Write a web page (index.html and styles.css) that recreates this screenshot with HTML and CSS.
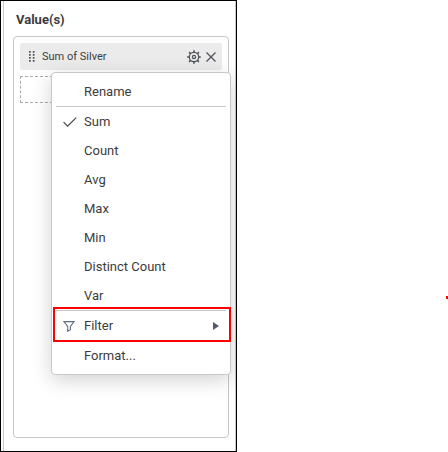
FILE: index.html
```html
<!DOCTYPE html>
<html lang="en">
<head>
<meta charset="utf-8">
<title>Value(s)</title>
<link rel="stylesheet" href="styles.css">
</head>
<body>
<main class="frame">
  <section class="panel">
    <h1 class="title">Value(s)</h1>
    <div class="values">
      <div class="chip">
        <svg class="grip" width="6" height="11" viewBox="0 0 6 11" fill="#505050"><path d="M0 0h1.7v1.7H0zM3.8 0h1.7v1.7H3.8zM0 3h1.7v1.7H0zM3.8 3h1.7v1.7H3.8zM0 6h1.7v1.7H0zM3.8 6h1.7v1.7H3.8zM0 9h1.7v1.7H0zM3.8 9h1.7v1.7H3.8z"/></svg>
        <span class="chip-label">Sum of Silver</span>
        <svg class="gear" width="14" height="14" viewBox="0 0 14 14" fill="none" stroke="#50545b"><circle cx="7" cy="7" r="4.7" stroke-width="1.3"/><circle cx="7" cy="7" r="1.6" stroke-width="1.3"/><path stroke-width="1.6" d="M7 .2v2M7 11.8v2M.2 7h2M11.8 7h2M2.1 2.1l1.5 1.5M10.4 10.4l1.5 1.5M2.1 11.9l1.5-1.5M10.4 3.6l1.5-1.5"/></svg>
        <svg class="close" width="10" height="10" viewBox="0 0 10 10" fill="none" stroke="#50545b" stroke-width="1.3"><path d="M.5.5l9 9M9.5.5l-9 9"/></svg>
      </div>
      <div class="drop"></div>
      <div class="menu">
        <div class="item">Rename</div>
        <hr>
        <div class="item"><svg class="icon" width="14" height="10" viewBox="0 0 14 10" fill="none" stroke="#444" stroke-width="1.2"><path d="M.6 5.1l4 4L13.2.6"/></svg>Sum</div>
        <div class="item">Count</div>
        <div class="item">Avg</div>
        <div class="item">Max</div>
        <div class="item">Min</div>
        <div class="item">Distinct Count</div>
        <div class="item">Var</div>
        <hr>
        <div class="item"><svg class="icon funnel" width="12" height="11" viewBox="0 0 12 11" fill="none" stroke="#5d6f86" stroke-width="1.1"><path d="M.9.6h10.2L7.4 5.4v3.2L4.7 10.2V5.4z"/></svg>Filter<svg class="arrow" width="6" height="8" viewBox="0 0 6 8" fill="#565c66"><path d="M0 0l6 4-6 4z"/></svg></div>
        <hr>
        <div class="item">Format...</div>
        <div class="highlight"></div>
      </div>
    </div>
  </section>
</main>
<span class="mark"></span>
</body>
</html>
```
FILE: styles.css
```css
* { box-sizing: border-box; }
body {
  margin: 0;
  background: #fff;
  color: #3c3c3c;
  font-family: Roboto, "Liberation Sans", sans-serif;
  overflow: hidden;
}
.frame {
  width: 237px;
  height: 452px;
  border: 1px solid #000;
  padding: 0 0 0 2px;
  overflow: hidden;
}
.panel {
  height: 100%;
  border: solid #c8c6c6;
  border-width: 0 1px;
  padding: 10px 6px 0 9px;
}
.title {
  margin: 0 0 7px 3px;
  height: 18px;
  font-size: 13px;
  line-height: 18px;
  font-weight: 700;
}
.values {
  position: relative;
  height: 402px;
  border: 1px solid #c8c8c8;
  border-radius: 4px;
  padding: 6px 6px 0 6px;
}
.chip {
  display: flex;
  align-items: center;
  height: 27px;
  border-radius: 2px;
  background: #ebebeb;
  padding: 0 6px 0 9px;
  font-size: 11px;
}
.chip-label { margin-left: 7px; flex: 1; }
.gear { margin-right: 5px; }
.drop {
  height: 27px;
  margin-top: 6px;
  border: 1px dashed #aaa;
}
.menu {
  position: absolute;
  left: 37px;
  top: 35px;
  width: 180px;
  height: 303px;
  padding: 4px;
  background: #fff;
  border: 1px solid #c8c8c8;
  border-radius: 4px;
  box-shadow: 0 5px 20px rgba(0, 0, 0, .18);
}
.menu hr {
  height: 1px;
  margin: 0;
  border: 0;
  background: #c8c8c8;
}
.item {
  position: relative;
  display: flex;
  align-items: center;
  height: 29px;
  padding-left: 28px;
  font-size: 13px;
}
.icon { position: absolute; left: 7px; top: 10px; }
.arrow { margin-left: auto; margin-right: 7px; }
.highlight {
  position: absolute;
  left: 1px;
  top: 234px;
  width: 178px;
  height: 35px;
  border: 2px solid #f00;
}
.mark {
  position: absolute;
  left: 446px;
  top: 296px;
  width: 2px;
  height: 3px;
  background: #f00;
}
```
